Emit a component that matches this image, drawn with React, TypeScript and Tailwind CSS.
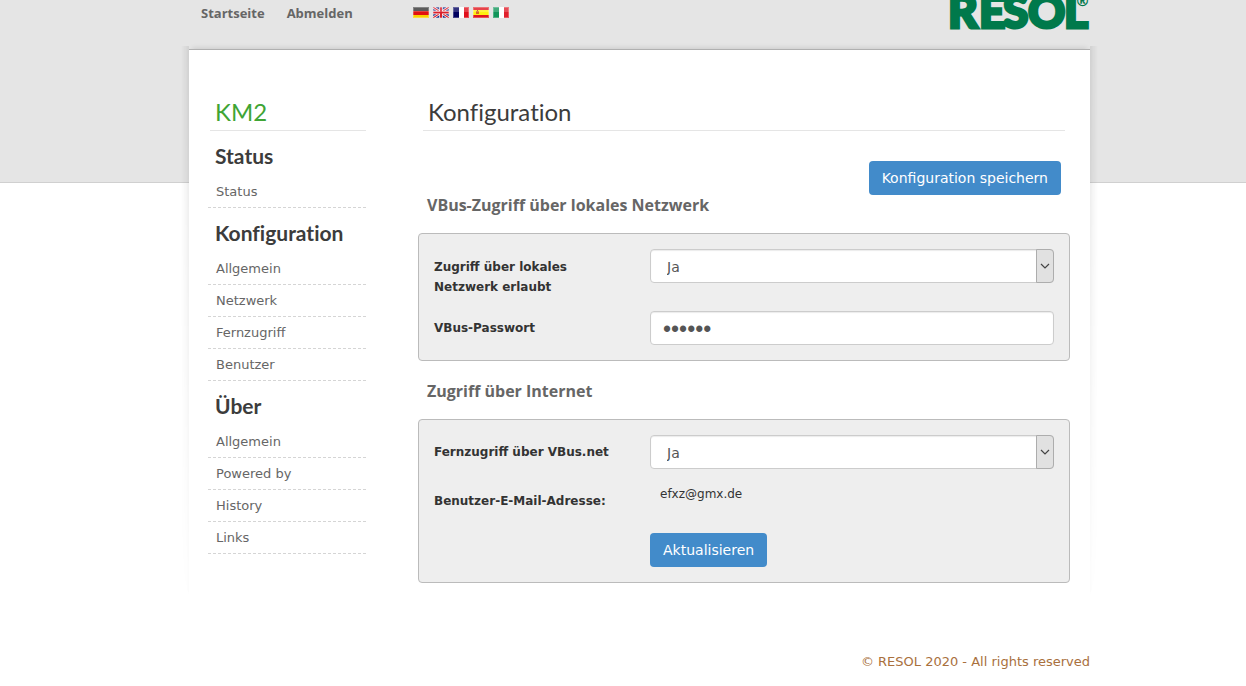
import { useState, type ReactNode } from "react";

const HEADING = "font-[Open_Sans,Noto_Sans,sans-serif]";
const TITLE = "font-[Lato,Noto_Sans,sans-serif] [font-variant-ligatures:none]";

const sections = [
  { title: "Status", items: ["Status"] },
  { title: "Konfiguration", items: ["Allgemein", "Netzwerk", "Fernzugriff", "Benutzer"] },
  { title: "Über", items: ["Allgemein", "Powered by", "History", "Links"] },
];

function Flag({ label, children }: { label: string; children: ReactNode }) {
  return (
    <a href="#" aria-label={label} className="block">
      <svg width="16" height="11" viewBox="0 0 16 11" className="block">
        {children}
        <rect width="16" height="5" fill="#fff" opacity="0.2" />
        <rect x="0.5" y="0.5" width="15" height="10" fill="none" stroke="#fff" opacity="0.25" />
      </svg>
    </a>
  );
}

function Flags() {
  return (
    <div className="flex gap-1">
      <Flag label="Deutsch">
        <rect width="16" height="4" fill="#333" />
        <rect y="4" width="16" height="4" fill="#e01010" />
        <rect y="8" width="16" height="3" fill="#f8d000" />
      </Flag>
      <Flag label="English">
        <rect width="16" height="11" fill="#1c2f86" />
        <path d="M0 0L16 11M16 0L0 11" stroke="#fff" strokeWidth="2.6" />
        <path d="M0 0L16 11M16 0L0 11" stroke="#d8202c" strokeWidth="1.2" />
        <path d="M8 0V11M0 5.5H16" stroke="#fff" strokeWidth="3.4" />
        <path d="M8 0V11M0 5.5H16" stroke="#d8202c" strokeWidth="2" />
      </Flag>
      <Flag label="Français">
        <rect width="6" height="11" fill="#00005f" />
        <rect x="6" width="5" height="11" fill="#fff" />
        <rect x="11" width="5" height="11" fill="#e0101c" />
      </Flag>
      <Flag label="Español">
        <rect width="16" height="11" fill="#e0141c" />
        <rect y="3" width="16" height="5" fill="#ffee10" />
        <rect x="3" y="4" width="3" height="3" fill="#d86a20" />
        <rect x="4" y="3" width="1" height="1" fill="#b03018" />
      </Flag>
      <Flag label="Italiano">
        <rect width="6" height="11" fill="#12955a" />
        <rect x="6" width="5" height="11" fill="#fff" />
        <rect x="11" width="5" height="11" fill="#e0202c" />
      </Flag>
    </div>
  );
}

function Select({ id }: { id: string }) {
  return (
    <div className="relative">
      <select
        id={id}
        defaultValue="Ja"
        className="block h-[34px] w-full appearance-none rounded border border-[#ccc] bg-white pt-[2px] pr-6 pl-4 text-[14px] text-[#555] shadow-[inset_0_1px_1px_rgba(0,0,0,0.08)]"
      >
        <option>Ja</option>
        <option>Nein</option>
      </select>
      <span className="pointer-events-none absolute inset-y-0 right-0 flex w-[18px] items-center justify-center rounded-r border border-[#adadad] bg-[#e1e1e1]">
        <svg width="10" height="6" viewBox="0 0 10 6" fill="none" stroke="#444" strokeWidth="1.2">
          <path d="M1 1L5 5L9 1" />
        </svg>
      </span>
    </div>
  );
}

function Button({ children }: { children: ReactNode }) {
  return (
    <button type="button" className="h-[34px] rounded bg-[#428bca] px-[13px] text-[14px] text-white">
      {children}
    </button>
  );
}

function Legend({ children }: { children: ReactNode }) {
  return <h2 className={`${HEADING} px-[9px] text-[16px] leading-5 font-bold text-[#666]`}>{children}</h2>;
}

const panel = "grid grid-cols-[216px_1fr] rounded border border-[#bbb] bg-[#eee] p-[15px]";
const label = "text-[12px] leading-5 font-bold text-[#333]";

function Shadow({ side }: { side: "left" | "right" }) {
  return (
    <div
      aria-hidden="true"
      className={
        side === "left"
          ? "absolute -top-1 right-full h-[560px] w-2 bg-linear-to-l from-black/8 to-transparent [mask-image:linear-gradient(black,transparent)]"
          : "absolute -top-1 left-full h-[560px] w-2 bg-linear-to-r from-black/8 to-transparent [mask-image:linear-gradient(black,transparent)]"
      }
    />
  );
}

export default function App() {
  const [password, setPassword] = useState("123456");
  return (
    <div className="relative min-h-screen bg-white pl-[33px] font-[Verdana,DejaVu_Sans,sans-serif] text-[13px] text-[#333]">
      <div aria-hidden="true" className="absolute inset-x-0 top-0 h-[183px] border-b border-[#d0d0d0] bg-[#e5e5e5]" />
      <div className="relative mx-auto max-w-[901px]">
        <header className="flex h-[49px] items-start overflow-hidden pl-3">
          <nav className={`${HEADING} flex w-[212px] gap-[22px] pt-1 text-[13px] leading-[18px] font-bold text-[#666]`}>
            <a href="#">Startseite</a>
            <a href="#">Abmelden</a>
          </nav>
          <div className="pt-[7px]">
            <Flags />
          </div>
          <a href="#" aria-label="RESOL" className="ml-auto">
            <svg width="141" height="34" viewBox="0 0 141 34" className="block">
              <text
                x="-1 30 54 79 115 126"
                y="28 28 28 28 28 6"
                fill="#00794b"
                stroke="#00794b"
                strokeWidth="3"
                className="font-[Lato,sans-serif] text-[46px] font-black"
              >
                RESOL
                <tspan strokeWidth="0" className="font-[DejaVu_Sans,sans-serif] text-[15px] font-bold">
                  ®
                </tspan>
              </text>
            </svg>
          </a>
        </header>

        <div className="relative border-t border-[#b0b0b0] bg-white shadow-[0_-4px_5px_-3px_rgba(0,0,0,0.12)]">
          <Shadow side="left" />
          <Shadow side="right" />
          <div className="flex items-start pt-10 pr-5 pl-[19px]">
            <aside className="w-[158px] shrink-0">
              <div className={`${TITLE} ml-[2px] h-[41px] border-b border-[#e5e5e5] pl-[5px] text-[24px] leading-[43px] text-[#3fa535]`}>
                KM2
              </div>
              <nav>
                {sections.map((section) => (
                  <section key={section.title}>
                    <h3 className={`${TITLE} h-[45px] pl-[7px] text-[21px] leading-[50px] font-bold text-[#3c3c3c]`}>
                      {section.title}
                    </h3>
                    <ul>
                      {section.items.map((item, i) => (
                        <li key={i} className="h-8 border-b border-dashed border-[#d5d5d5] pl-2 leading-8 text-[#666]">
                          <a href="#">{item}</a>
                        </li>
                      ))}
                    </ul>
                  </section>
                ))}
              </nav>
            </aside>

            <main className="ml-[52px] min-w-0 flex-1 pb-[17px]">
              <h1 className={`${TITLE} mx-[5px] h-[41px] border-b border-[#e5e5e5] pl-[5px] text-[24px] leading-[43px] text-[#3c3c3c]`}>
                Konfiguration
              </h1>
              <div className="flex justify-end pt-[30px] pr-[9px]">
                <Button>Konfiguration speichern</Button>
              </div>
              <Legend>VBus-Zugriff über lokales Netzwerk</Legend>
              <div className={`${panel} mt-[18px] gap-y-7`}>
                <label htmlFor="local" className={`${label} -mb-5 pt-2 pr-16`}>
                  Zugriff über lokales Netzwerk erlaubt
                </label>
                <Select id="local" />
                <label htmlFor="password" className={`${label} pt-[7px]`}>
                  VBus-Passwort
                </label>
                <input
                  id="password"
                  type="password"
                  value={password}
                  onChange={(e) => setPassword(e.target.value)}
                  className="block h-[34px] w-full rounded border border-[#ccc] bg-white px-3 pt-[3px] font-[Liberation_Sans,sans-serif] text-[23px] text-[#555] shadow-[inset_0_1px_1px_rgba(0,0,0,0.08)]"
                />
              </div>

              <div className="pt-5">
                <Legend>Zugriff über Internet</Legend>
              </div>
              <div className={`${panel} mt-[18px]`}>
                <label htmlFor="remote" className={`${label} pt-[7px]`}>
                  Fernzugriff über VBus.net
                </label>
                <Select id="remote" />
                <div className={`${label} pt-[22px]`}>Benutzer-E-Mail-Adresse:</div>
                <div className="h-16 pt-[15px] pl-[10px] text-[12px] leading-5">efxz@gmx.de</div>
                <div className="col-start-2">
                  <Button>Aktualisieren</Button>
                </div>
              </div>
            </main>
          </div>
        </div>

        <footer className="pt-[52px] pb-4 text-right text-[13px] leading-5 text-[#a9703d]">
          © RESOL 2020 - All rights reserved
        </footer>
      </div>
    </div>
  );
}
